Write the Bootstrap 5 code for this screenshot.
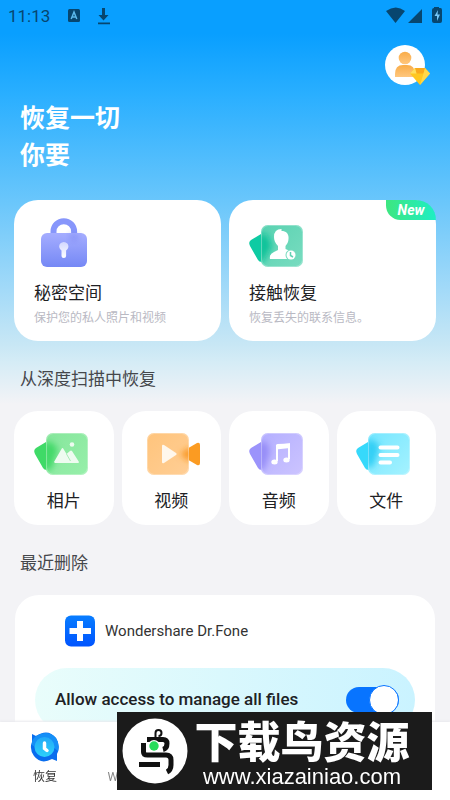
<!DOCTYPE html>
<html lang="zh-CN">
<head>
<meta charset="utf-8">
<meta name="viewport" content="width=device-width, initial-scale=1">
<title>Dr.Fone</title>
<link href="https://cdn.jsdelivr.net/npm/bootstrap@5.3.0/dist/css/bootstrap.min.css" rel="stylesheet">
<style>
body{font-family:Roboto,"Noto Sans CJK SC",sans-serif;background:#f3f3f6;color:#202124}
.screen{min-height:100vh;padding:0 14px;background:linear-gradient(#099fff 0,#099fff 34px,#2aafff 95px,#6cc7fb 205px,#a3daf8 290px,#c8e7f5 345px,#d5ecf6 362px,#f3f3f6 404px)}
.status{height:32px;font-size:17px;line-height:32px;color:#07466f;margin-left:-6px;margin-right:-8px}
.status svg{display:block}
.account{width:46px;height:42px;margin:13px 5px 0 0}
.headline{font-size:25px;line-height:37px;margin:13px 6px 26px;font-weight:700;color:#fff}
.tile{background:#fff;border-radius:24px;color:#202124;text-decoration:none;flex:1 1 0}
.tile-lg{padding:16px 20px 14px}
.tile-sm{padding:13px 4px 11px}
.tile-name{font-size:17px;line-height:26px;margin-top:12px}
.tile-note{font-size:12px;line-height:18px;margin-top:3px;color:#b9b9c3}
.new-tag{right:0;top:0;width:50px;height:20px;border-radius:0 22px 0 16px;background:linear-gradient(90deg,#3ee680,#1eeec4);font-size:14px;line-height:21px}
.section-title{font-size:17px;line-height:24px;font-weight:400;color:#45474b;margin:26px 6px 20px}
.panel{background:#fff;border-radius:24px;padding:20px;margin:0 1px}
.app-row{padding-left:30px;gap:10px;font-size:15px;line-height:32px;color:#333}
.access{height:64px;margin-top:21px;padding:0 16px 0 20px;border-radius:32px;background:linear-gradient(90deg,#e9fdfb,#caf3ff);font-size:17px;font-weight:500}
.toggle{appearance:none;width:53px;height:26px;border-radius:13px;background:#0874ff;margin:0;position:relative}
.toggle::before{content:"";position:absolute;right:0;top:-2px;width:30px;height:30px;border-radius:50%;background:#fff;border:1px solid #0874ff}
.tabs{height:78px;background:#fff;box-shadow:0 -1px 2px #e9e9ed}
.tab-link{width:20%;padding-top:10px;font-size:12px;line-height:18px;color:#888;text-decoration:none}
.tab-link.active{color:#333}
.tab-link svg{width:30px;height:30px;margin-bottom:6px}
.banner{position:fixed;z-index:1040;bottom:10px;left:26%;right:4%;height:78px;padding:0 16px 0 5px;background:#1b1b1b;color:#fff}
.banner-name{font:900 43px/42px "Noto Sans CJK SC",sans-serif;padding-bottom:4px}
.banner-site{font:22px/26px "Liberation Sans",sans-serif}
</style>
<script src="https://cdn.jsdelivr.net/npm/bootstrap@5.3.0/dist/js/bootstrap.bundle.min.js" defer></script>
</head>
<body>
<svg width="0" height="0" class="position-absolute" aria-hidden="true">
  <defs>
    <filter id="soft" x="-50%" y="-50%" width="200%" height="200%"><feGaussianBlur stdDeviation="3"/></filter>
    <linearGradient id="gLock" x2="0" y2="1"><stop stop-color="#a5adff"/><stop offset="1" stop-color="#7588f5"/></linearGradient>
    <linearGradient id="gKey" x2="0" y2="1"><stop stop-color="#d3d7ff"/><stop offset="1" stop-color="#fff"/></linearGradient>
    <linearGradient id="gTeal" x2="1" y2="1"><stop stop-color="#59d2b1"/><stop offset="1" stop-color="#79dcc0"/></linearGradient>
    <linearGradient id="gGreen" x2="1" y2="1"><stop stop-color="#86e69c"/><stop offset="1" stop-color="#97efaa"/></linearGradient>
    <linearGradient id="gOrange" x2="1" y2="1"><stop stop-color="#ffc47c"/><stop offset="1" stop-color="#ffce95"/></linearGradient>
    <linearGradient id="gViolet" x2="1" y2="1"><stop stop-color="#b4afff"/><stop offset="1" stop-color="#ccc4ff"/></linearGradient>
    <linearGradient id="gCyan" x2="1" y2="1"><stop stop-color="#75e6ff"/><stop offset="1" stop-color="#a5f2ff"/></linearGradient>
    <linearGradient id="gUser" x2="0" y2="1"><stop stop-color="#f9ac48"/><stop offset="1" stop-color="#ffc77e"/></linearGradient>
    <linearGradient id="gApp" x2="0" y2="1"><stop stop-color="#087dff"/><stop offset="1" stop-color="#0054ff"/></linearGradient>
    <linearGradient id="gSync" x2="0" y2="1"><stop stop-color="#22a9f7"/><stop offset="1" stop-color="#2cd1fa"/></linearGradient>
    <clipPath id="cardClip"><rect x="12" y="9" width="42" height="42" rx="7"/></clipPath>
    <clipPath id="camClip"><rect x="6" y="9" width="42" height="42" rx="7"/></clipPath>
    <path id="tab" d="M12 18 2 24Q-1 26 1 30L9 44Q10 46 13 46L18 44V18Z"/>
  </defs>
</svg>

<main class="screen">
  <header>
    <div class="status d-flex align-items-center">
      <span>11:13</span>
      <svg class="ms-3" width="16" height="16" viewBox="0 0 16 16"><rect x="2" y="1" width="12" height="13" rx="1.5" fill="#07466f"/><path d="M5.200 11 8 4l2.800 7M6 9h4" stroke="#5bb9ec" stroke-width="1.500" fill="none"/></svg>
      <svg class="ms-3" width="14" height="18" viewBox="0 0 14 18"><path d="M4 0h3v7h3.500L5.500 12.500 .5 7H4zM-1 14.500h13v1.700H-1z" fill="#07466f" transform="translate(0 1)"/></svg>
      <svg class="ms-auto" width="58" height="18" viewBox="0 0 58 18" fill="#07466f"><path d="M0 4Q10-3 19 4L9.500 16ZM22 16 36 2V16ZM48 1V0h5v1h1.500Q56 1 56 3V14q0 2-2 2H48q-2 0-2-2V3q0-2 2-2Z"/><path d="M52 3 48.500 9H51v5l3-6.500h-2.500Z" fill="#75c7f7"/></svg>
    </div>
    <div class="d-flex justify-content-end">
      <a href="#" class="account" aria-label="账户"><svg class="d-block" width="46" height="42" viewBox="0 0 46 42"><circle cx="20" cy="20" r="20" fill="#fff"/><circle cx="20" cy="13" r="6.300" fill="url(#gUser)"/><path d="M10 32V29Q10 20 18 20h4q8 0 8 9v3Z" fill="url(#gUser)"/><path d="M30 23h10l5 5.500L35 40 25 28.500Z" fill="#ffc71e"/><path d="M30 23h10l-1.500 5.500h-7Z" fill="#f9a91d"/><path d="m25 28.500 5-5.500 1.500 5.500Z" fill="#ffdf5f"/><path d="m40 23 5 5.500L35 40l3.500-11.500Z" fill="#ffd84a"/></svg></a>
    </div>
    <h1 class="headline">恢复一切<br>你要</h1>
  </header>

  <div class="d-flex gap-2">
    <a href="#" class="tile tile-lg">
      <svg class="d-block" width="60" height="52" viewBox="0 0 60 52"><path d="M19.500 20V15.500a10.300 10.300 0 0 1 20.600 0V20" fill="none" stroke="#8796fb" stroke-width="6"/><rect x="7" y="17" width="46" height="34" rx="6" fill="url(#gLock)"/><ellipse cx="40" cy="21" rx="4" ry="4" fill="#7180f0" opacity=".55" filter="url(#soft)"/><path d="M27.500 34.500a4.600 4.600 0 1 1 4.600 0V40q0 2-2.300 2t-2.300-2Z" fill="url(#gKey)"/></svg>
      <div class="tile-name">秘密空间</div>
      <div class="tile-note">保护您的私人照片和视频</div>
    </a>
    <a href="#" class="tile tile-lg position-relative">
      <span class="new-tag position-absolute text-white text-center fst-italic fw-bold">New</span>
      <svg class="d-block" width="60" height="52" viewBox="0 0 60 52"><use href="#tab" fill="#0ecba3"/><rect x="12" y="9" width="42" height="42" rx="7" fill="url(#gTeal)"/><g clip-path="url(#cardClip)"><path d="M9 18h9l5 12-9 16H9Z" fill="#0bc39a" filter="url(#soft)"/></g><rect x="12.500" y="9.500" width="41" height="41" rx="7" fill="none" stroke="#fff" stroke-opacity=".3"/><path d="M32.500 15c5 0 7.500 3 7 8 0 3-1.500 5-3 7v3l7 3v7H21q-1-5 4-7l4-2v-4c-3-3-4-6-4-9q0-8 7.500-8Z" fill="#fff"/><circle cx="42" cy="39" r="5.500" fill="#77dbbf"/><circle cx="42" cy="39" r="4.500" fill="#fff"/><path d="M41.500 36v3.500l2.500 1.500" fill="none" stroke="#62d2b4" stroke-width="1.500"/></svg>
      <div class="tile-name">接触恢复</div>
      <div class="tile-note">恢复丢失的联系信息。</div>
    </a>
  </div>

  <h2 class="section-title">从深度扫描中恢复</h2>
  <div class="d-flex gap-2 text-center">
    <a href="#" class="tile tile-sm">
      <svg class="d-block mx-auto" width="60" height="52" viewBox="0 0 60 52"><use href="#tab" fill="#3fda67"/><rect x="12" y="9" width="42" height="42" rx="7" fill="url(#gGreen)"/><g clip-path="url(#cardClip)"><path d="M9 18h9l6 7-7 21H9Z" fill="#42d969" filter="url(#soft)"/></g><rect x="12.500" y="9.500" width="41" height="41" rx="7" fill="none" stroke="#fff" stroke-opacity=".3"/><path d="M20 38 27.500 25q1-2 2 0l3 5 3.500-3q1-1 2 0L45 38q0 1-1 1H21Z" fill="#eefbf0"/><path d="m32.500 30 4 7" stroke="#a8ebb6"/><circle cx="38" cy="20.500" r="2.300" fill="#eefbf0"/></svg>
      <div class="tile-name">相片</div>
    </a>
    <a href="#" class="tile tile-sm">
      <svg class="d-block mx-auto" width="60" height="52" viewBox="0 0 60 52"><path d="M44 26 56 19q3-1 3 2v18q0 3-3 2L44 34Z" fill="#fb9b22"/><rect x="6" y="9" width="42" height="42" rx="7" fill="url(#gOrange)"/><g clip-path="url(#camClip)"><path d="M39 30 51 22V39Z" fill="#f9941a" filter="url(#soft)"/></g><rect x="6.500" y="9.500" width="41" height="41" rx="7" fill="none" stroke="#fff" stroke-opacity=".3"/><path d="M21 22q0-2 2-1l12 8q1.500 1 0 2l-12 8q-2 1-2-1Z" fill="#fff7ec"/></svg>
      <div class="tile-name">视频</div>
    </a>
    <a href="#" class="tile tile-sm">
      <svg class="d-block mx-auto" width="60" height="52" viewBox="0 0 60 52"><use href="#tab" fill="#9b93fb"/><rect x="12" y="9" width="42" height="42" rx="7" fill="url(#gViolet)"/><g clip-path="url(#cardClip)"><path d="M9 18h9l3 10-6 18H9Z" fill="#958cf7" filter="url(#soft)"/></g><rect x="12.500" y="9.500" width="41" height="41" rx="7" fill="none" stroke="#fff" stroke-opacity=".3"/><path d="M28 37V22l12-1.500V35" fill="none" stroke="#fff" stroke-width="2"/><path d="M27 21.500q0-1.500 1.500-1.500L41 19.500V24l-14 1.500Z" fill="#fff"/><ellipse cx="25.500" cy="38" rx="3.200" ry="2.500" fill="#fff"/><ellipse cx="37.500" cy="36" rx="3.200" ry="2.500" fill="#fff"/></svg>
      <div class="tile-name">音频</div>
    </a>
    <a href="#" class="tile tile-sm">
      <svg class="d-block mx-auto" width="60" height="52" viewBox="0 0 60 52"><use href="#tab" fill="#36d9fb"/><rect x="12" y="9" width="42" height="42" rx="7" fill="url(#gCyan)"/><g clip-path="url(#cardClip)"><path d="M9 16h9l6 7-7 20H9Z" fill="#32cff5" filter="url(#soft)"/></g><rect x="12.500" y="9.500" width="41" height="41" rx="7" fill="none" stroke="#fff" stroke-opacity=".3"/><path d="M24.500 23.500h17M24.500 31h17M24.500 38.500h9.500" stroke="#fff" stroke-width="4" stroke-linecap="round"/></svg>
      <div class="tile-name">文件</div>
    </a>
  </div>

  <h2 class="section-title">最近删除</h2>
  <section class="panel">
    <div class="app-row d-flex align-items-center">
      <svg width="30" height="32" viewBox="0 0 30 32"><rect y="0.500" width="30" height="31" rx="6" fill="url(#gApp)"/><path d="M12 6h6v7h8v6h-8v7h-6v-7H4.500v-6H12Z" fill="#fff"/></svg>
      <span>Wondershare Dr.Fone</span>
    </div>
    <div class="access d-flex align-items-center justify-content-between">
      <label for="allow">Allow access to manage all files</label>
      <input id="allow" class="toggle" type="checkbox" role="switch" checked>
    </div>
  </section>
</main>

<nav class="tabs fixed-bottom d-flex text-center">
  <a href="#" class="tab-link active"><svg class="d-block mx-auto" viewBox="0 0 30 30"><path d="M2 2 6 4Q18-4 26 6q5 8 1 16V29l-5-2Q11 33 4 24-1 17 2 10Z" fill="#096dee"/><path d="M6 4Q18-3 26 6q4 6 2 13l-5-4H5L2 13Q1 8 6 4Z" fill="#148ff7"/><circle cx="14.500" cy="15" r="10" fill="url(#gSync)"/><path d="M14.500 11v5.500l2.500 2" fill="none" stroke="#fff" stroke-width="3.500" stroke-linecap="round"/></svg>恢复</a>
  <a href="#" class="tab-link"><svg class="d-block mx-auto" viewBox="0 0 30 30"></svg>WhatsApp</a>
</nav>

<aside class="banner d-flex align-items-center">
  <svg class="flex-shrink-0" width="66" height="66" viewBox="0 0 66 66"><circle cx="33" cy="33" r="32.500" fill="#fff"/><g fill="none" stroke="#111" stroke-width="5" stroke-linejoin="round"><path d="M25 21.500H41q4 0 4 4 0 5-4 6M21.500 25v9q0 3 4 3H44q5 0 5 5v5q0 5-4 7"/><path d="M17 46.500h21"/><path d="M33.500 20v-5q0-3 3-3t3 3-3 3" stroke-width="2"/></g><circle cx="32" cy="28" r="6" fill="#fff"/><circle cx="32" cy="28" r="4.700" fill="#27dc5b"/></svg>
  <div class="flex-grow-1 text-nowrap text-center align-self-end">
    <div class="banner-name">下载鸟资源</div>
    <div class="banner-site">www.xiazainiao.com</div>
  </div>
</aside>
</body>
</html>
